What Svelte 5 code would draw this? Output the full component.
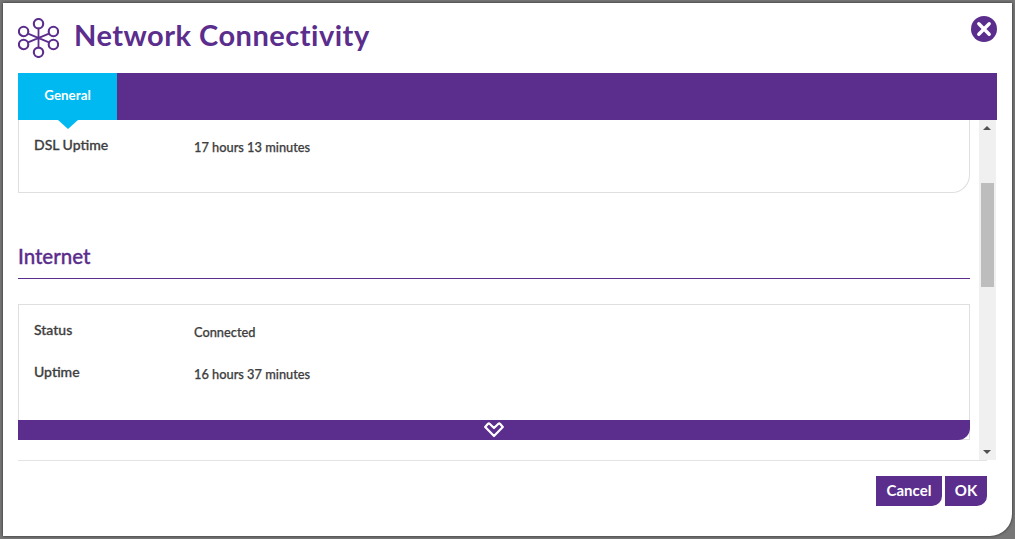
<script>
  const internet = [
    { label: 'Status', value: 'Connected' },
    { label: 'Uptime', value: '16 hours 37 minutes' }
  ];
</script>

<div class="screen">
  <div class="dialog">
    <header class="head">
      <svg class="logo" width="41" height="40" viewBox="0 0 41 40" fill="none" stroke="#5b2d8c" stroke-width="2.1">
        <path d="M20.5 8V32M7 14.3 34 25.7M34 14.3 7 25.7" stroke-width="1.8" />
        <circle cx="20.5" cy="5.7" r="4.7" fill="#fff" />
        <circle cx="20.5" cy="34.3" r="4.7" fill="#fff" />
        <circle cx="5.6" cy="13.5" r="4.7" fill="#fff" />
        <circle cx="35.4" cy="13.5" r="4.7" fill="#fff" />
        <circle cx="5.6" cy="26.5" r="4.7" fill="#fff" />
        <circle cx="35.4" cy="26.5" r="4.7" fill="#fff" />
      </svg>
      <h1>Network Connectivity</h1>
      <svg class="close" width="26" height="26" viewBox="0 0 26 26">
        <circle cx="13" cy="13" r="13" fill="#5b2d8c" />
        <path d="M7.8 7.8 18.2 18.2M18.2 7.8 7.8 18.2" stroke="#fff" stroke-width="3.4" stroke-linecap="round" />
      </svg>
    </header>

    <nav class="tabs">
      <div class="tab">General</div>
    </nav>

    <div class="body">
      <div class="scroll">
        <section class="card first">
          <div class="row"><span class="k">DSL Uptime</span><span class="v">17 hours 13 minutes</span></div>
        </section>
        <h2>Internet</h2>
        <section class="card second">
          {#each internet as r}
            <div class="row"><span class="k">{r.label}</span><span class="v">{r.value}</span></div>
          {/each}
        </section>
        <div class="more">
          <svg width="20" height="16" viewBox="0 0 20 16" fill="none" stroke="#fff" stroke-width="2.2" stroke-linejoin="round">
            <path d="M1.2 5 4 1.8Q4.8 1.1 5.6 1.8L10 6 14.4 1.8Q15.2 1.1 16 1.8L18.8 5 10 14Z" />
          </svg>
        </div>
      </div>
      <div class="bar">
        <span class="up"></span>
        <div class="thumb"></div>
        <span class="down"></span>
      </div>
    </div>

    <footer class="foot">
      <button class="cancel">Cancel</button>
      <button class="ok">OK</button>
    </footer>
  </div>
</div>

<style>
  :global(body) {
    margin: 0;
    background: #6a6a6a;
    font-family: "Lato", "Noto Sans", sans-serif;
  }
  .screen {
    width: 1015px;
    height: 539px;
    box-sizing: border-box;
    padding: 3px;
    background: #777;
    overflow: hidden;
  }
  .dialog {
    width: 1009px;
    height: 533px;
    background: #fff;
    border-radius: 0 0 22px 0;
    box-shadow: 0 0 3px #222;
    display: flex;
    flex-direction: column;
    position: relative;
  }
  .head {
    height: 70px;
    display: flex;
    align-items: center;
    padding: 0 15px;
    flex: none;
  }
  .logo {
    flex: none;
  }
  h1 {
    margin: -8px 0 0 15px;
    font-size: 29px;
    font-weight: 700;
    letter-spacing: 0.5px;
    color: #5b2d8c;
    flex: 1;
  }
  .close {
    margin-top: -18px;
    flex: none;
  }
  .tabs {
    height: 47px;
    margin: 0 15px;
    background: #5b2d8c;
    flex: none;
    position: relative;
    z-index: 1;
  }
  .tab {
    width: 99px;
    height: 47px;
    padding-bottom: 3px;
    box-sizing: border-box;
    background: #00b9f0;
    color: #fff;
    font-size: 13.4px;
    font-weight: 700;
    display: flex;
    align-items: center;
    justify-content: center;
    position: relative;
  }
  .tab::after {
    content: "";
    position: absolute;
    left: 40px;
    top: 47px;
    border-left: 10px solid transparent;
    border-right: 10px solid transparent;
    border-top: 9px solid #00b9f0;
  }
  .body {
    height: 340px;
    margin: 0 16px 0 15px;
    display: flex;
    flex: none;
  }
  .scroll {
    width: 952px;
    height: 340px;
    overflow: hidden;
    position: relative;
    flex: none;
  }
  .card {
    box-sizing: border-box;
    border: 1px solid #dfdfdf;
    border-radius: 0 0 18px 0;
    padding: 0 15px;
  }
  .first {
    height: 73px;
    border-top: none;
    padding-top: 7px;
  }
  .second {
    height: 136px;
    margin-top: 25px;
    padding-top: 7px;
    border-radius: 0;
  }
  .row {
    height: 42px;
    display: flex;
    color: #3e3e3e;
  }
  .k {
    width: 160px;
    font-size: 14px;
    font-weight: 500;
    -webkit-text-stroke: 0.3px #3e3e3e;
    line-height: 36px;
    flex: none;
  }
  .v {
    font-size: 12.8px;
    font-weight: 500;
    -webkit-text-stroke: 0.25px #3e3e3e;
    line-height: 40px;
  }
  h2 {
    margin: 46px 0 0;
    height: 40px;
    box-sizing: border-box;
    border-bottom: 1px solid #5b2d8c;
    font-size: 20.5px;
    font-weight: 500;
    -webkit-text-stroke: 0.35px #5b2d8c;
    line-height: 34px;
    color: #5b2d8c;
  }
  .more {
    position: absolute;
    left: 0;
    right: 0;
    top: 300px;
    height: 20px;
    background: #5b2d8c;
    border-radius: 0 0 12px 0;
    display: flex;
    align-items: center;
    justify-content: center;
  }
  .bar {
    width: 17px;
    margin-left: 9px;
    height: 340px;
    background: #f0f0f0;
    position: relative;
    flex: none;
  }
  .up, .down {
    position: absolute;
    left: 4px;
    border-left: 4px solid transparent;
    border-right: 4px solid transparent;
  }
  .up {
    top: 6px;
    border-bottom: 4px solid #505050;
  }
  .down {
    bottom: 6px;
    border-top: 4px solid #505050;
  }
  .thumb {
    position: absolute;
    left: 2px;
    top: 63px;
    width: 13px;
    height: 104px;
    background: #bdbdbd;
  }
  .foot {
    margin: 0 25px 0 15px;
    border-top: 1px solid #e3e3e3;
    padding-top: 15px;
    display: flex;
    justify-content: flex-end;
    gap: 3px;
  }
  button {
    height: 30px;
    border: none;
    padding: 0 0 2px;
    background: #5b2d8c;
    color: #fff;
    font-family: inherit;
    font-size: 15px;
    font-weight: 700;
    border-radius: 0 0 10px 0;
  }
  .cancel { width: 66px; }
  .ok { width: 42px; }
</style>
